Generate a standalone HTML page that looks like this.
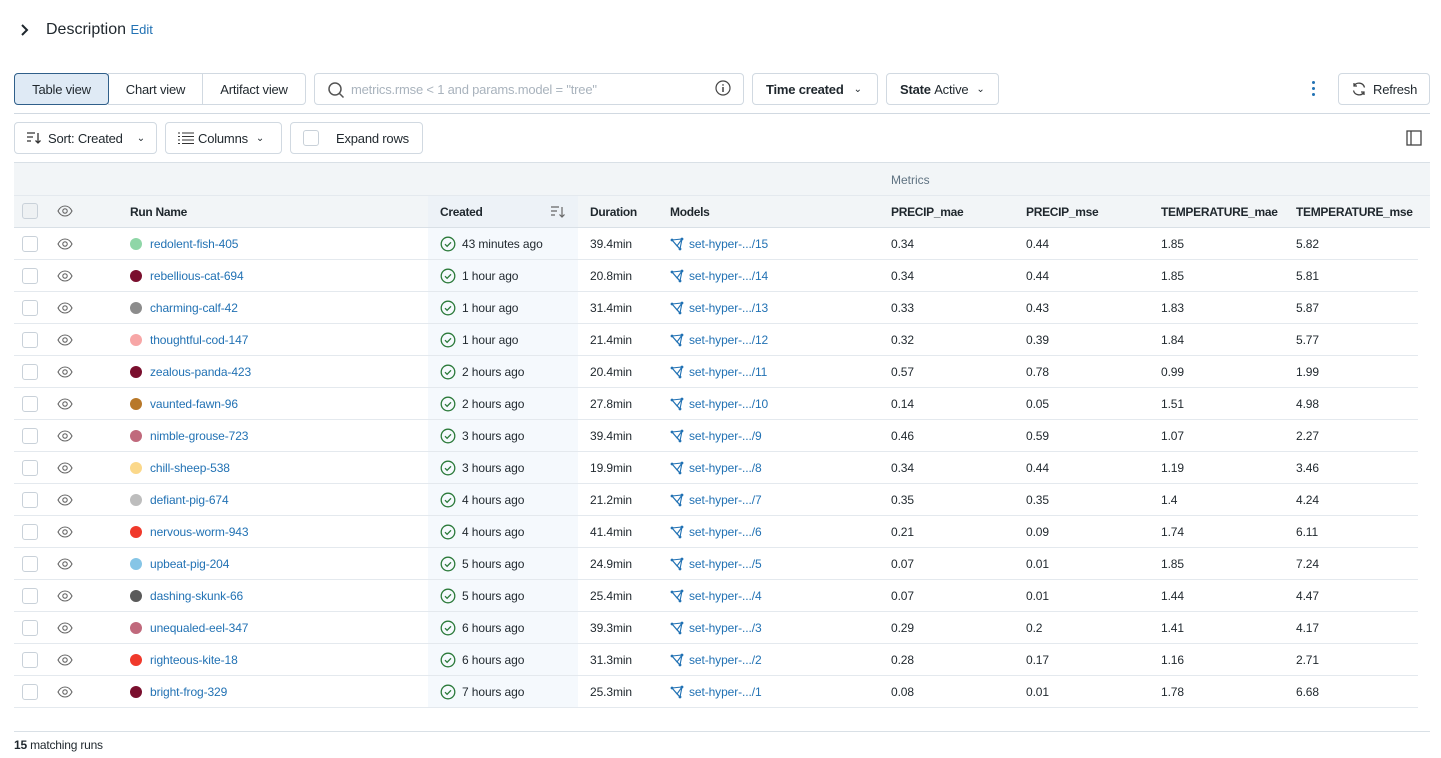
<!DOCTYPE html>
<html><head><meta charset="utf-8"><style>
*{box-sizing:border-box;margin:0;padding:0}
body{width:1441px;height:758px;background:#fff;font-family:"Liberation Sans",sans-serif;color:#1f272d;position:relative;overflow:hidden;font-size:13px}
.a{position:absolute}
.btn{position:absolute;border:1px solid #d1d9e1;border-radius:4px;background:#fff;height:32px;display:flex;align-items:center;font-size:13px;color:#1f272d;letter-spacing:-0.2px}
.cb{position:absolute;width:16px;height:16px;border:1px solid #c9d1d9;border-radius:3px;background:#fff}
.row{position:absolute;left:14px;width:1404px;height:32px;border-bottom:1px solid #e4e9ee;font-size:12px;letter-spacing:-0.1px}
.row span{position:absolute;top:9px;white-space:nowrap}
.lnk{color:#2272b4}
.cr{position:absolute;left:414px;top:0;width:150px;height:31px;background:#f5f9fd}
.dot{position:absolute;left:116px;top:10px;width:12px;height:12px;border-radius:50%}
.hd{font-weight:bold;font-size:12px;position:absolute;letter-spacing:-0.3px}
</style></head><body>
<div class="a" style="left:20px;top:22px;font-size:16px">
<svg width="10" height="14" viewBox="0 0 10 14" style="position:absolute;left:0;top:1px"><path d="M2 2l5 5-5 5" stroke="#1f272d" stroke-width="2" fill="none"/></svg></div>
<div class="a" style="left:46px;top:21px;font-size:16px;color:#1f272d">Description <span style="font-size:13px;color:#2272b4">Edit</span></div>

<div class="btn" style="left:14px;top:73px;width:95px;background:#dfeaf5;border-color:#2f5f8a;justify-content:center;z-index:2">Table view</div>
<div class="btn" style="left:108px;top:73px;width:95px;justify-content:center;border-radius:0">Chart view</div>
<div class="btn" style="left:202px;top:73px;width:104px;justify-content:center;border-radius:0 4px 4px 0">Artifact view</div>
<div class="btn" style="left:314px;top:73px;width:430px;color:#a9b3bd;padding-left:36px">metrics.rmse &lt; 1 and params.model = "tree"</div>
<svg class="a" style="left:327px;top:81px" width="18" height="18" viewBox="0 0 18 18"><circle cx="8" cy="8" r="6" stroke="#555" stroke-width="1.5" fill="none"/><path d="M12.5 12.5l4 4" stroke="#555" stroke-width="1.5"/></svg>
<svg class="a" style="left:715px;top:80px" width="16" height="16" viewBox="0 0 16 16"><circle cx="8" cy="8" r="7" stroke="#444" stroke-width="1.2" fill="none"/><path d="M8 7v5M8 4.3v1.3" stroke="#444" stroke-width="1.5"/></svg>
<div class="btn" style="left:752px;top:73px;width:126px;padding-left:13px;font-weight:bold">Time created <span style="font-weight:normal;margin-left:10px;font-size:10px">&#x2304;</span></div>
<div class="btn" style="left:886px;top:73px;width:113px;padding-left:13px"><b>State</b>&nbsp;Active <span style="margin-left:8px;font-size:10px">&#x2304;</span></div>
<div class="a" style="left:1312px;top:81px;width:3px"><div style="width:3px;height:3px;background:#2272b4;border-radius:50%;margin-bottom:3px"></div><div style="width:3px;height:3px;background:#2272b4;border-radius:50%;margin-bottom:3px"></div><div style="width:3px;height:3px;background:#2272b4;border-radius:50%"></div></div>
<div class="btn" style="left:1338px;top:73px;width:92px;padding-left:34px">Refresh</div>
<svg class="a" style="left:1351px;top:81px" width="16" height="16" viewBox="0 0 16 16"><path d="M13.5 6.5A5.7 5.7 0 0 0 3 5M2.5 9.5A5.7 5.7 0 0 0 13 11M3 2v3h3M13 14v-3h-3" stroke="#444" stroke-width="1.3" fill="none"/></svg>
<div class="a" style="left:14px;top:113px;width:1416px;height:1px;background:#d1d9e1"></div>

<div class="btn" style="left:14px;top:122px;width:143px;padding-left:33px">Sort: Created <span style="margin-left:14px;font-size:10px">&#x2304;</span></div>
<svg class="a" style="left:26px;top:130px" width="16" height="16" viewBox="0 0 16 16"><path d="M1 3h8M1 7h6M1 11h4M12 3v10M9.5 10.5L12 13l2.5-2.5" stroke="#333" stroke-width="1.3" fill="none"/></svg>
<div class="btn" style="left:165px;top:122px;width:117px;padding-left:32px">Columns <span style="margin-left:8px;font-size:10px">&#x2304;</span></div>
<svg class="a" style="left:178px;top:131px" width="16" height="14" viewBox="0 0 16 14"><path d="M0 2h2M4 2h12M0 5.5h2M4 5.5h12M0 9h2M4 9h12M0 12.5h2M4 12.5h12" stroke="#333" stroke-width="1"/></svg>
<div class="btn" style="left:290px;top:122px;width:133px;padding-left:45px">Expand rows</div>
<div class="cb" style="left:303px;top:130px"></div>
<svg class="a" style="left:1406px;top:130px" width="16" height="16" viewBox="0 0 16 16"><rect x="1" y="1" width="14" height="14" stroke="#444" stroke-width="1.3" fill="none"/><path d="M5 1v14" stroke="#444" stroke-width="1.3"/></svg>

<div class="a" style="left:14px;top:162px;width:1416px;height:66px;background:#f2f5f7;border-top:1px solid #d9e0e6;border-bottom:1px solid #d9e0e6"></div>
<div class="a" style="left:14px;top:195px;width:1416px;height:1px;background:#e4e9ee"></div>
<div class="a" style="left:428px;top:196px;width:150px;height:31px;background:#edf2f7"></div>
<div class="a" style="left:891px;top:173px;color:#5f7281;font-size:12px">Metrics</div>
<div class="cb" style="left:22px;top:203px;background:#eef1f3"></div>
<svg class="a" style="left:57px;top:204px" width="16" height="14" viewBox="0 0 16 14"><path d="M1 7C3 3 5.5 2 8 2s5 1 7 5c-2 4-4.5 5-7 5s-5-1-7-5z" stroke="#666" stroke-width="1.1" fill="none"/><circle cx="8" cy="7" r="2.2" stroke="#666" stroke-width="1.1" fill="none"/></svg>
<div class="hd" style="left:130px;top:205px">Run Name</div>
<div class="hd" style="left:440px;top:205px">Created</div>
<svg class="a" style="left:550px;top:204px" width="16" height="16" viewBox="0 0 16 16"><path d="M1 3h8M1 7h6M1 11h4M12 3v10M9.5 10.5L12 13l2.5-2.5" stroke="#666" stroke-width="1.2" fill="none"/></svg>
<div class="hd" style="left:590px;top:205px">Duration</div>
<div class="hd" style="left:670px;top:205px">Models</div>
<div class="hd" style="left:891px;top:205px">PRECIP_mae</div>
<div class="hd" style="left:1026px;top:205px">PRECIP_mse</div>
<div class="hd" style="left:1161px;top:205px">TEMPERATURE_mae</div>
<div class="hd" style="left:1296px;top:205px">TEMPERATURE_mse</div>

<div id="rows"></div>
<div class="a" style="left:14px;top:731px;width:1416px;height:1px;background:#d9e0e6"></div>
<div class="a" style="left:14px;top:738px;font-size:12px;letter-spacing:-0.2px"><b>15</b> matching runs</div>
<script>
var d=[["redolent-fish-405","#8fd6a7","43 minutes ago","39.4min",15,"0.34","0.44","1.85","5.82"],
["rebellious-cat-694","#7a0f2e","1 hour ago","20.8min",14,"0.34","0.44","1.85","5.81"],
["charming-calf-42","#8c8c8c","1 hour ago","31.4min",13,"0.33","0.43","1.83","5.87"],
["thoughtful-cod-147","#f7a6a6","1 hour ago","21.4min",12,"0.32","0.39","1.84","5.77"],
["zealous-panda-423","#7a0f2e","2 hours ago","20.4min",11,"0.57","0.78","0.99","1.99"],
["vaunted-fawn-96","#b87829","2 hours ago","27.8min",10,"0.14","0.05","1.51","4.98"],
["nimble-grouse-723","#c0697c","3 hours ago","39.4min",9,"0.46","0.59","1.07","2.27"],
["chill-sheep-538","#fbd88a","3 hours ago","19.9min",8,"0.34","0.44","1.19","3.46"],
["defiant-pig-674","#bdbdbd","4 hours ago","21.2min",7,"0.35","0.35","1.4","4.24"],
["nervous-worm-943","#f0392b","4 hours ago","41.4min",6,"0.21","0.09","1.74","6.11"],
["upbeat-pig-204","#86c5e6","5 hours ago","24.9min",5,"0.07","0.01","1.85","7.24"],
["dashing-skunk-66","#5a5a5a","5 hours ago","25.4min",4,"0.07","0.01","1.44","4.47"],
["unequaled-eel-347","#c0697c","6 hours ago","39.3min",3,"0.29","0.2","1.41","4.17"],
["righteous-kite-18","#f0392b","6 hours ago","31.3min",2,"0.28","0.17","1.16","2.71"],
["bright-frog-329","#7a0f2e","7 hours ago","25.3min",1,"0.08","0.01","1.78","6.68"]];
var eye='<svg style="position:absolute;left:43px;top:9px" width="16" height="14" viewBox="0 0 16 14"><path d="M1 7C3 3 5.5 2 8 2s5 1 7 5c-2 4-4.5 5-7 5s-5-1-7-5z" stroke="#666" stroke-width="1.1" fill="none"/><circle cx="8" cy="7" r="2.2" stroke="#666" stroke-width="1.1" fill="none"/></svg>';
var chk='<svg style="position:absolute;left:426px;top:8px" width="16" height="16" viewBox="0 0 16 16"><circle cx="8" cy="8" r="6.8" stroke="#2b7a3a" stroke-width="1.3" fill="none"/><path d="M5 8.2l2.1 2.1L11 6.3" stroke="#2b7a3a" stroke-width="1.3" fill="none"/></svg>';
var mdl='<svg style="position:absolute;left:656px;top:9px" width="15" height="14" viewBox="0 0 15 14"><path d="M2 3l10-1-2 10zM2 3l5 6 5-7M7 9l3 3" stroke="#2272b4" stroke-width="1.1" fill="none"/><circle cx="2" cy="3" r="1.4" fill="#2272b4"/><circle cx="12" cy="2" r="1.4" fill="#2272b4"/><circle cx="10" cy="12" r="1.4" fill="#2272b4"/></svg>';
var h='';
d.forEach(function(r,i){var t=228+i*32;
h+='<div class="row" style="top:'+t+'px"><div class="cr"></div><div class="cb" style="left:8px;top:8px"></div>'+eye+
'<div class="dot" style="background:'+r[1]+'"></div><span class="lnk" style="left:136px">'+r[0]+'</span>'+chk+
'<span style="left:448px">'+r[2]+'</span><span style="left:576px">'+r[3]+'</span>'+mdl+
'<span class="lnk" style="left:675px">set-hyper-.../'+r[4]+'</span><span style="left:877px">'+r[5]+'</span><span style="left:1012px">'+r[6]+'</span><span style="left:1147px">'+r[7]+'</span><span style="left:1282px">'+r[8]+'</span></div>';});
document.getElementById('rows').innerHTML=h;
</script>
</body></html>
